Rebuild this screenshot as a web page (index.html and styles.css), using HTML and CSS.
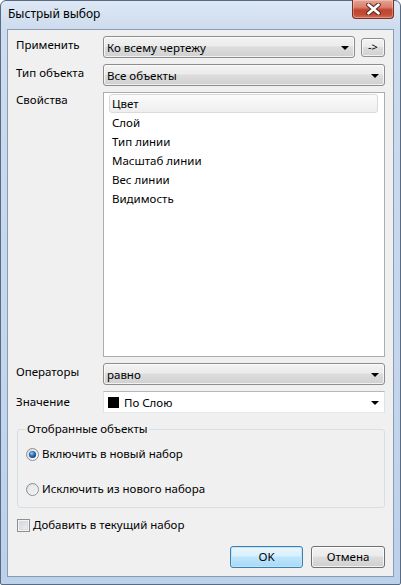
FILE: index.html
```html
<!DOCTYPE html>
<html lang="ru">
<head>
<meta charset="utf-8">
<title>Быстрый выбор</title>
<link rel="stylesheet" href="styles.css">
</head>
<body>
<svg class="defs" width="0" height="0" aria-hidden="true">
  <defs>
    <linearGradient id="radioRing" x1="0" y1="0" x2="1" y2="1">
      <stop offset="0" stop-color="#d6d6d6"/>
      <stop offset="1" stop-color="#ffffff"/>
    </linearGradient>
    <radialGradient id="radioDot" cx="0.4" cy="0.35" r="0.7">
      <stop offset="0" stop-color="#a9d3f5"/>
      <stop offset="0.45" stop-color="#2f74c0"/>
      <stop offset="1" stop-color="#123f7a"/>
    </radialGradient>
  </defs>
</svg>
<div class="window">
  <div class="titlebar">
    <span class="title">Быстрый выбор</span>
    <div class="close">
      <svg width="15" height="12" viewBox="0 0 15 12">
        <path d="M2.5 1.8 L12.5 10.2 M12.5 1.8 L2.5 10.2" stroke="#4f2219" stroke-width="4.6" stroke-linecap="round"/>
        <path d="M2.5 1.8 L12.5 10.2 M12.5 1.8 L2.5 10.2" stroke="#ffffff" stroke-width="2.8" stroke-linecap="round"/>
      </svg>
    </div>
  </div>
  <div class="client">
    <div class="form">
      <div class="label">Применить</div>
      <div class="ctrl-row">
        <div class="combo"><span class="combo-text">Ко всему чертежу</span><span class="arrow"></span></div>
        <div class="small-btn">-&gt;</div>
      </div>
      <div class="label">Тип объекта</div>
      <div class="combo"><span class="combo-text">Все объекты</span><span class="arrow"></span></div>
      <div class="label label-list">Свойства</div>
      <div class="listbox">
        <div class="item item-focus">Цвет</div>
        <div class="item">Слой</div>
        <div class="item">Тип линии</div>
        <div class="item">Масштаб линии</div>
        <div class="item">Вес линии</div>
        <div class="item">Видимость</div>
      </div>
      <div class="label">Операторы</div>
      <div class="combo"><span class="combo-text">равно</span><span class="arrow"></span></div>
      <div class="label label-value">Значение</div>
      <div class="combo combo-edit"><span class="swatch"></span><span class="combo-text">По Слою</span><span class="arrow"></span></div>
    </div>
    <div class="group">
      <div class="group-title">Отобранные объекты</div>
      <div class="radio-row radio-first">
        <svg class="radio" width="13" height="13" viewBox="0 0 13 13">
          <circle cx="6.5" cy="6.5" r="6" fill="url(#radioRing)" stroke="#8c8f94"/>
          <circle cx="6.5" cy="6.5" r="3.6" fill="url(#radioDot)"/>
        </svg>
        <span>Включить в новый набор</span>
      </div>
      <div class="radio-row radio-second">
        <svg class="radio" width="13" height="13" viewBox="0 0 13 13">
          <circle cx="6.5" cy="6.5" r="6" fill="url(#radioRing)" stroke="#8c8f94"/>
          <circle cx="6.5" cy="6.5" r="4" fill="#ececec"/>
        </svg>
        <span>Исключить из нового набора</span>
      </div>
    </div>
    <div class="check-row">
      <span class="checkbox"></span>
      <span>Добавить в текущий набор</span>
    </div>
    <div class="buttons">
      <div class="btn btn-default">OK</div>
      <div class="btn">Отмена</div>
    </div>
  </div>
</div>
</body>
</html>
```

FILE: styles.css
```css
* { box-sizing: border-box; }
html, body { margin: 0; padding: 0; }
body {
  width: 401px;
  height: 585px;
  overflow: hidden;
  background: #ffffff;
  font-family: "Noto Sans", "Open Sans", sans-serif;
  font-size: 11.5px;
  color: #000;
}
.defs { position: absolute; width: 0; height: 0; }

.window {
  width: 401px;
  height: 585px;
  border: 1px solid #596b82;
  border-radius: 6px 6px 2px 2px;
  background: linear-gradient(to bottom, #dde8f4 0, #cddcee 28px, #c3d6ec 60%, #bcd1ea 100%);
  padding: 0 6px 7px 6px;
  display: flex;
  flex-direction: column;
}

.titlebar {
  height: 28px;
  display: flex;
  align-items: flex-start;
}
.title {
  padding: 5px 0 0 1px;
  line-height: 16px;
  font-size: 12px;
  color: #000;
}
.close {
  margin-left: auto;
  margin-top: -1px;
  width: 42px;
  height: 19px;
  border: 1px solid #7a2f22;
  border-top: none;
  border-radius: 0 0 4px 4px;
  background: linear-gradient(to bottom, #e7a292 0, #d9806c 40%, #c1442e 55%, #c44c35 80%, #d36d55 100%);
  box-shadow: inset 0 0 0 1px rgba(255,255,255,0.3);
  display: flex;
  align-items: center;
  justify-content: center;
}

.client {
  flex: 1;
  border: 1px solid #8a9bb3;
  background: #f0f0f0;
  padding: 6px 8px 8px 8px;
  display: flex;
  flex-direction: column;
}

.form {
  display: grid;
  grid-template-columns: 87px 1fr;
  grid-template-rows: 22px 22px 265px 22px 22px;
  row-gap: 6px;
}
.label {
  line-height: 16px;
  padding-top: 1px;
}
.label-list { padding-top: 0; }
.label-value { padding-top: 3px; }

.ctrl-row {
  display: flex;
  align-items: center;
  gap: 6px;
}
.ctrl-row .combo { flex: 1; }

.combo {
  height: 22px;
  border: 1px solid #8d8d8d;
  border-radius: 3px;
  background: linear-gradient(to bottom, #f3f3f3 0, #ebebeb 45%, #dddddd 50%, #d0d0d0 100%);
  box-shadow: inset 0 0 0 1px rgba(255,255,255,0.7);
  display: flex;
  align-items: center;
  padding: 1px 5px 0 3px;
  line-height: 20px;
}
.combo-text { white-space: nowrap; }
.arrow {
  margin-left: auto;
  width: 0;
  height: 0;
  border-left: 4px solid transparent;
  border-right: 4px solid transparent;
  border-top: 4px solid #000;
}
.combo-edit {
  background: #ffffff;
  border-color: #b5b9bf #dde3ea #e3e9ef #dde3ea;
  border-radius: 0;
  box-shadow: none;
  padding-left: 4px;
}
.swatch {
  width: 11px;
  height: 11px;
  background: #000;
  margin-right: 5px;
}

.small-btn {
  width: 24px;
  height: 19px;
  border: 1px solid #8d8d8d;
  border-radius: 3px;
  background: linear-gradient(to bottom, #f3f3f3 0, #ebebeb 45%, #dddddd 50%, #d0d0d0 100%);
  box-shadow: inset 0 0 0 1px rgba(255,255,255,0.7);
  display: flex;
  align-items: center;
  justify-content: center;
  font-size: 11px;
  line-height: 14px;
}

.listbox {
  background: #ffffff;
  border: 1px solid #abadb3;
  padding: 1px 6px 1px 5px;
}
.item {
  height: 19px;
  line-height: 19px;
  padding-left: 3px;
  white-space: nowrap;
}
.item-focus {
  border: 1px solid #dadada;
  border-radius: 3px;
  background: linear-gradient(to bottom, #fbfbfb 0, #eeeeee 100%);
  line-height: 17px;
  padding-left: 2px;
}

.group {
  margin: 16px 0 0 1px;
  border: 1px solid #d5dfe5;
  border-radius: 3px;
  padding: 0 8px 10px 8px;
}
.group-title {
  width: fit-content;
  margin-top: -9px;
  padding: 0 1px;
  line-height: 16px;
  background: #f0f0f0;
}
.radio-row {
  display: flex;
  align-items: center;
  gap: 3px;
  height: 16px;
  line-height: 16px;
}
.radio-first { margin-top: 9px; }
.radio-second { margin-top: 19px; }
.radio { display: block; flex: none; }

.check-row {
  margin: 9px 0 0 1px;
  display: flex;
  align-items: center;
  gap: 3px;
  height: 16px;
  line-height: 16px;
}
.checkbox {
  width: 13px;
  height: 13px;
  border: 1px solid #8e8f8f;
  background: linear-gradient(135deg, #cbcfd5 0, #f4f4f4 100%);
  box-shadow: inset 0 0 0 1px #f4f4f4, inset 0 0 0 2px #d9dce0;
}

.buttons {
  margin-top: 13px;
  display: flex;
  justify-content: flex-end;
  gap: 8px;
}
.btn {
  width: 74px;
  height: 22px;
  border: 1px solid #707070;
  border-radius: 3px;
  background: linear-gradient(to bottom, #f2f2f2 0, #ebebeb 45%, #dddddd 50%, #cfcfcf 100%);
  box-shadow: inset 0 0 0 1px rgba(255,255,255,0.75);
  display: flex;
  align-items: center;
  justify-content: center;
  line-height: 16px;
}
.btn-default {
  width: 73px;
  border-color: #3c7fb1;
  background: linear-gradient(to bottom, #eaf6fd 0, #d9f0fc 45%, #bee6fd 50%, #a7d9f5 100%);
  box-shadow: inset 0 0 0 1px #c1e4f7;
}
```
